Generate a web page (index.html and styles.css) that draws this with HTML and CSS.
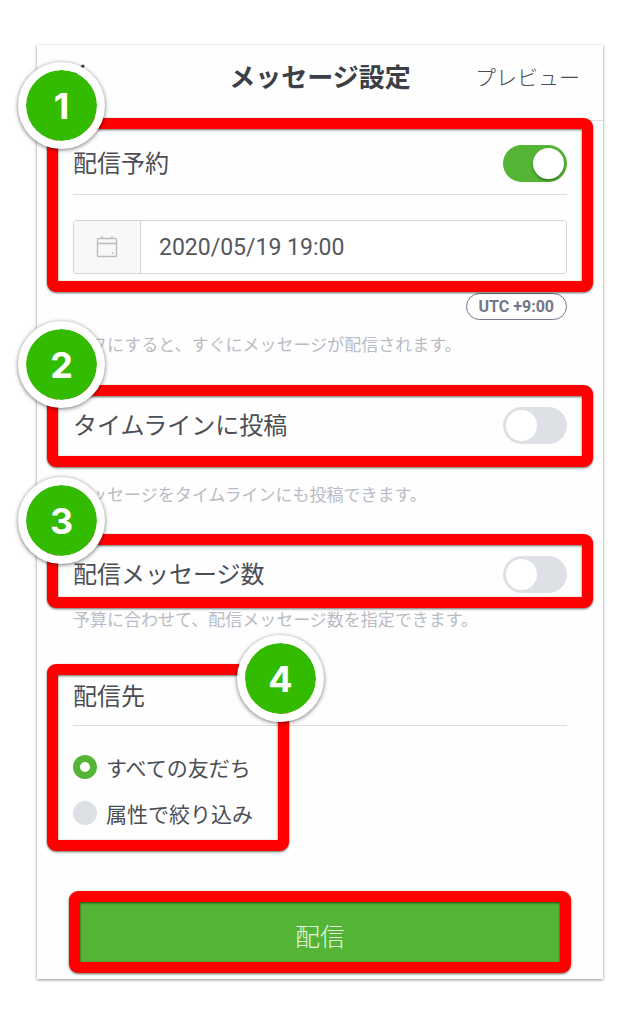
FILE: index.html
```html
<!DOCTYPE html>
<html lang="ja">
<head>
<meta charset="utf-8">
<meta name="viewport" content="width=device-width, initial-scale=1">
<title>メッセージ設定</title>
<link rel="stylesheet" href="styles.css">
</head>
<body>
<form class="card">
  <header class="header">
    <button class="back" type="button" aria-label="戻る">
      <svg width="18" height="28" viewBox="0 0 18 28" fill="none" stroke="#3c3f46" stroke-width="3" stroke-linecap="round" stroke-linejoin="round"><path d="M15 2 3 14l12 12"/></svg>
    </button>
    <h1 class="title">メッセージ設定</h1>
    <a class="preview" href="#preview">プレビュー</a>
  </header>

  <section class="section schedule">
    <div class="row row-divided">
      <label class="label" for="reserve">配信予約</label>
      <input class="toggle" id="reserve" type="checkbox" checked>
    </div>
    <div class="date">
      <label class="date-icon" for="date" aria-label="配信日時">
        <svg width="22" height="22" viewBox="0 0 22 22" fill="none" stroke="#b9bcc2" stroke-width="1.4"><rect x="1.5" y="2.5" width="19" height="18" rx="1"/><path d="M1.5 7.5h19M6 0v2.5M16 0v2.5M16 17h1.5"/></svg>
      </label>
      <input class="date-input" id="date" type="text" value="2020/05/19 19:00">
    </div>
    <span class="badge">1</span>
  </section>
  <div class="zone-row"><span class="zone">UTC +9:00</span></div>
  <p class="hint hint-schedule">オフにすると、すぐにメッセージが配信されます。</p>

  <section class="section timeline">
    <div class="row">
      <label class="label" for="timeline">タイムラインに投稿</label>
      <input class="toggle" id="timeline" type="checkbox">
    </div>
    <span class="badge">2</span>
  </section>
  <p class="hint hint-timeline">メッセージをタイムラインにも投稿できます。</p>

  <section class="section count">
    <div class="row">
      <label class="label" for="count">配信メッセージ数</label>
      <input class="toggle" id="count" type="checkbox">
    </div>
    <span class="badge">3</span>
  </section>
  <p class="hint">予算に合わせて、配信メッセージ数を指定できます。</p>

  <section class="section audience">
    <h2 class="label audience-title">配信先</h2>
    <div class="options">
      <label class="option"><input class="radio" type="radio" name="audience" checked>すべての友だち</label>
      <label class="option"><input class="radio" type="radio" name="audience">属性で絞り込み</label>
    </div>
    <span class="badge">4</span>
  </section>

  <div class="section submit">
    <button class="send" type="submit">配信</button>
  </div>
</form>
</body>
</html>
```
FILE: styles.css
```css
*,
*::before,
*::after {
  box-sizing: border-box;
}

body {
  margin: 0;
  padding: 45px 37px;
  background: #fff;
  color: #4b4e55;
  font-family: Roboto, "Noto Sans CJK JP", sans-serif;
}

.card {
  padding-bottom: 6px;
  background: #fefefe;
  box-shadow: 0 1px 3px rgba(0, 0, 0, 0.45);
}

.header {
  display: grid;
  grid-template-columns: 1fr auto 1fr;
  align-items: center;
  height: 76px;
  padding: 0 23px 10px;
  border-bottom: 1px solid #dedede;
}

.back {
  display: flex;
  justify-self: start;
  padding: 0 8px;
  border: 0;
  background: none;
}

.title {
  margin: 0;
  color: #3c3f46;
  font-size: 26px;
  font-weight: 700;
  line-height: 36px;
}

.preview {
  justify-self: end;
  color: #4b4e55;
  font-size: 21px;
  font-weight: 300;
  line-height: 36px;
  text-decoration: none;
}

.section {
  position: relative;
  margin: 0 10px;
  padding: 11px 26px;
}

/* Red outline that highlights a step, drawn over its section */
.section::after {
  content: "";
  position: absolute;
  inset: 0;
  border: 11px solid #f00;
  border-radius: 9px;
  filter: drop-shadow(0 1px 1px rgba(0, 0, 0, 0.6));
  pointer-events: none;
}

.badge {
  position: absolute;
  z-index: 1;
  display: flex;
  align-items: center;
  justify-content: center;
  width: 87px;
  height: 87px;
  border: 8px solid #fff;
  border-radius: 50%;
  background: #3b0;
  background-clip: padding-box;
  box-shadow: 0 1px 4px rgba(0, 0, 0, 0.55);
  color: #fff;
  font-family: Inter, sans-serif;
  font-size: 36px;
  font-weight: 700;
  line-height: 1;
}

.row {
  display: flex;
  align-items: center;
  justify-content: space-between;
}

.row-divided {
  height: 66px;
  padding-top: 4px;
  border-bottom: 1px solid #dedede;
}

.label {
  font-size: 24px;
  font-weight: 400;
  line-height: 36px;
}

.toggle {
  appearance: none;
  display: flex;
  width: 64px;
  height: 37px;
  margin: 0;
  padding: 3px;
  border-radius: 19px;
  background: #dde0e5;
}

.toggle::before {
  content: "";
  width: 31px;
  height: 31px;
  border-radius: 50%;
  background: #fff;
}

.toggle:checked {
  justify-content: flex-end;
  background: #53b435;
}

.toggle:checked::before {
  box-shadow: 0 2px 3px rgba(0, 0, 0, 0.3);
}

.schedule {
  margin-top: -3px;
  padding-bottom: 18px;
}

.schedule .badge {
  top: -56px;
  left: -29px;
}

.date {
  display: flex;
  height: 54px;
  margin-top: 25px;
  border: 1px solid #d3d5d8;
  border-radius: 3px;
  overflow: hidden;
}

.date-icon {
  display: flex;
  align-items: center;
  justify-content: center;
  width: 67px;
  border-right: 1px solid #d3d5d8;
  background: #f8f8f9;
}

.date-input {
  flex: 1;
  min-width: 0;
  padding: 0 18px;
  border: 0;
  background: #fff;
  color: #55585d;
  font-family: Roboto, sans-serif;
  font-size: 23px;
}

.zone-row {
  display: flex;
  justify-content: flex-end;
  padding: 1px 36px 0;
}

.zone {
  padding: 0 12px;
  border: 1px solid #737789;
  border-radius: 14px;
  color: #737789;
  font-size: 16px;
  font-weight: 700;
  line-height: 25px;
}

.hint {
  margin: 0 36px;
  color: #b9bcc4;
  font-size: 17px;
  line-height: 24px;
}

.hint-schedule {
  margin-top: 13px;
}

.hint-timeline {
  margin-top: 16px;
}

.timeline {
  margin-top: 28px;
  padding-top: 22px;
  padding-bottom: 23px;
}

.timeline .badge {
  top: -64px;
  left: -29px;
}

.count {
  margin-top: 27px;
  padding-top: 22px;
  padding-bottom: 15px;
}

.count .badge {
  top: -57px;
  left: -29px;
}

.audience {
  margin-top: 32px;
  padding-top: 15px;
  padding-bottom: 15px;
}

.audience::after {
  right: auto;
  width: 242px;
}

.audience .badge {
  top: -29px;
  left: 190px;
}

.audience-title {
  margin: 0;
  padding-bottom: 10px;
  border-bottom: 1px solid #dedede;
}

.options {
  display: grid;
  padding-top: 18px;
}

.option {
  display: flex;
  align-items: center;
  gap: 9px;
  height: 46px;
  font-family: "Noto Sans CJK JP", sans-serif;
  font-size: 21px;
}

.radio {
  appearance: none;
  width: 24px;
  height: 24px;
  margin: 0;
  border-radius: 50%;
  background: #dde0e5;
}

.radio:checked {
  border: 7px solid #53b435;
  background: #fff;
}

.submit {
  margin: 40px 32px 0;
  padding: 10px 10px 4px;
}

.send {
  display: block;
  width: 100%;
  height: 68px;
  border: 0;
  background: #53b435;
  color: #e6f5e1;
  font-family: "Noto Sans CJK JP", sans-serif;
  font-size: 25px;
  font-weight: 300;
}
```
